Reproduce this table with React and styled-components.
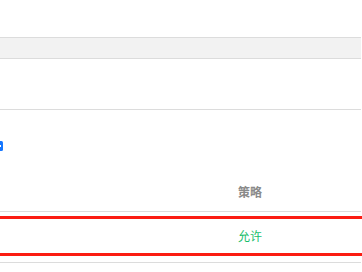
import React from "react";
import styled, { createGlobalStyle } from "styled-components";

const Global = createGlobalStyle`
  html, body { margin: 0; padding: 0; background: #fff; overflow: hidden; }
  body { font-family: "Noto Sans CJK SC", "Noto Sans", sans-serif; font-size: 12px; }
`;

const Page = styled.div`
  width: 361px;
  display: flex;
  flex-direction: column;
  padding-top: 37px;
`;

const Band = styled.div`
  height: 20px;
  background: #f2f2f2;
  border-top: 1px solid #dcdcdc;
  border-bottom: 1px solid #dcdcdc;
`;

const Section = styled.div`
  height: 50px;
  border-bottom: 1px solid #dcdcdc;
`;

const Toolbar = styled.div`
  height: 62px;
  display: flex;
  align-items: flex-start;
  padding-top: 31px;
  box-sizing: border-box;
`;

const AddIcon = styled.svg`
  width: 10px;
  height: 10px;
  margin-left: -7px;
  display: block;
`;

const HeaderRow = styled.div`
  display: grid;
  grid-template-columns: 238px 1fr;
  height: 39px;
  align-items: center;
  border-bottom: 1px solid #dcdcdc;
`;

const HeadCell = styled.div`
  color: #8a8a8a;
  font-weight: bold;
  line-height: 16px;
`;

const BodyRow = styled.div`
  height: 50px;
  border-bottom: 1px solid #dcdcdc;
  padding-top: 4px;
  box-sizing: content-box;
  height: 46px;
`;

const Selected = styled.div`
  margin: 0 -4px;
  height: 34px;
  border-top: 3px solid #fb1c12;
  border-bottom: 3px solid #fb1c12;
  display: grid;
  grid-template-columns: 242px 1fr;
  align-items: center;
`;

const Cell = styled.div`
  color: ${(p) => p.$color || "#333"};
  line-height: 16px;
`;

export default function App() {
  return (
    <>
      <Global />
      <Page>
        <Band />
        <Section />
        <Toolbar>
          <AddIcon viewBox="0 0 10 10">
            <rect x="0" y="0" width="10" height="10" rx="1.5" fill="#1677ff" />
            <rect x="2" y="4" width="6" height="2" fill="#fff" />
            <rect x="4" y="2" width="2" height="6" fill="#fff" />
          </AddIcon>
        </Toolbar>
        <HeaderRow>
          <div />
          <HeadCell>策略</HeadCell>
        </HeaderRow>
        <BodyRow>
          <Selected>
            <div />
            <Cell $color="#19be6b">允许</Cell>
          </Selected>
        </BodyRow>
      </Page>
    </>
  );
}
